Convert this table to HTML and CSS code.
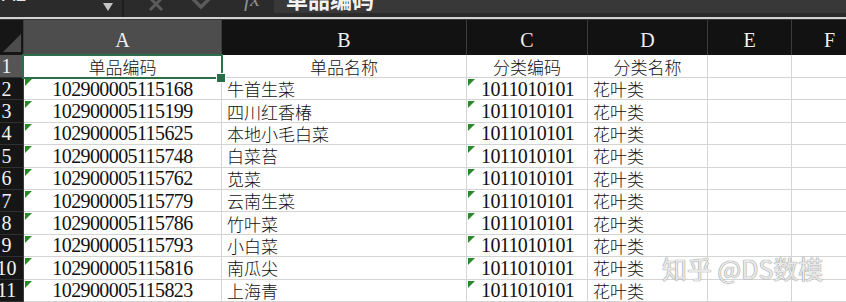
FILE: index.html
```html
<!DOCTYPE html>
<html lang="zh">
<head>
<meta charset="utf-8">
<title>Sheet</title>
<link rel="stylesheet" href="styles.css">
</head>
<body>
<div class="page">
  <div class="topbar">
    <div class="namebox"><span class="nb-text">A1</span><span class="nb-arrow"></span></div>
    <div class="tools">
      <svg class="ic ic-x" width="16" height="12" viewBox="0 0 16 12"><path d="M2 -2 L14 10 M14 -2 L2 10" stroke="#5a5a5a" stroke-width="3" fill="none"/></svg>
      <svg class="ic ic-check" width="20" height="12" viewBox="0 0 20 12"><path d="M1 -1 L9 7 L19 -3" stroke="#5a5a5a" stroke-width="3.5" fill="none"/></svg>
      <span class="fx">fx</span>
    </div>
    <div class="formula"><span class="f-text">单品编码</span></div>
  </div>
  <div class="divider"></div>
  <div class="grid">
    <div class="corner"><span class="corner-tri"></span></div>
    <div class="ch ch-sel">A</div>
    <div class="ch">B</div>
    <div class="ch">C</div>
    <div class="ch">D</div>
    <div class="ch">E</div>
    <div class="ch">F</div>

    <div class="rh rh-sel">1</div>
    <div class="c cjk center sel">单品编码<span class="handle"></span></div>
    <div class="c cjk center">单品名称</div>
    <div class="c cjk center">分类编码</div>
    <div class="c cjk center">分类名称</div>
    <div class="c"></div>
    <div class="c"></div>

    <div class="rh">2</div>
    <div class="c num center tri">102900005115168</div>
    <div class="c cjk">牛首生菜</div>
    <div class="c num code tri">1011010101</div>
    <div class="c cjk">花叶类</div>
    <div class="c"></div>
    <div class="c"></div>

    <div class="rh">3</div>
    <div class="c num center tri">102900005115199</div>
    <div class="c cjk">四川红香椿</div>
    <div class="c num code tri">1011010101</div>
    <div class="c cjk">花叶类</div>
    <div class="c"></div>
    <div class="c"></div>

    <div class="rh">4</div>
    <div class="c num center tri">102900005115625</div>
    <div class="c cjk">本地小毛白菜</div>
    <div class="c num code tri">1011010101</div>
    <div class="c cjk">花叶类</div>
    <div class="c"></div>
    <div class="c"></div>

    <div class="rh">5</div>
    <div class="c num center tri">102900005115748</div>
    <div class="c cjk">白菜苔</div>
    <div class="c num code tri">1011010101</div>
    <div class="c cjk">花叶类</div>
    <div class="c"></div>
    <div class="c"></div>

    <div class="rh">6</div>
    <div class="c num center tri">102900005115762</div>
    <div class="c cjk">苋菜</div>
    <div class="c num code tri">1011010101</div>
    <div class="c cjk">花叶类</div>
    <div class="c"></div>
    <div class="c"></div>

    <div class="rh">7</div>
    <div class="c num center tri">102900005115779</div>
    <div class="c cjk">云南生菜</div>
    <div class="c num code tri">1011010101</div>
    <div class="c cjk">花叶类</div>
    <div class="c"></div>
    <div class="c"></div>

    <div class="rh">8</div>
    <div class="c num center tri">102900005115786</div>
    <div class="c cjk">竹叶菜</div>
    <div class="c num code tri">1011010101</div>
    <div class="c cjk">花叶类</div>
    <div class="c"></div>
    <div class="c"></div>

    <div class="rh">9</div>
    <div class="c num center tri">102900005115793</div>
    <div class="c cjk">小白菜</div>
    <div class="c num code tri">1011010101</div>
    <div class="c cjk">花叶类</div>
    <div class="c"></div>
    <div class="c"></div>

    <div class="rh">10</div>
    <div class="c num center tri">102900005115816</div>
    <div class="c cjk">南瓜尖</div>
    <div class="c num code tri">1011010101</div>
    <div class="c cjk">花叶类</div>
    <div class="c"></div>
    <div class="c"></div>

    <div class="rh">11</div>
    <div class="c num center tri">102900005115823</div>
    <div class="c cjk">上海青</div>
    <div class="c num code tri">1011010101</div>
    <div class="c cjk">花叶类</div>
    <div class="c"></div>
    <div class="c"></div>
  </div>
  <div class="watermark">知乎 @DS数模</div>
</div>
</body>
</html>
```

FILE: styles.css
```css
html, body {
  margin: 0;
  padding: 0;
  background: #ffffff;
}
body {
  width: 846px;
  height: 302px;
  overflow: hidden;
}
.page {
  position: relative;
  width: 846px;
  height: 302px;
  overflow: hidden;
}

/* formula bar */
.topbar {
  display: flex;
  height: 17px;
  background: #2b2b2b;
  overflow: hidden;
}
.namebox {
  width: 124px;
  display: flex;
  justify-content: space-between;
  align-items: flex-start;
  border-right: 2px solid #1e1e1e;
  padding-left: 2px;
  box-sizing: border-box;
}
.nb-text {
  font-family: "Liberation Sans", Arial, sans-serif;
  font-size: 20px;
  line-height: 20px;
  color: #e6e6e6;
  margin-top: -16px;
}
.nb-arrow {
  width: 0;
  height: 0;
  border-left: 5px solid transparent;
  border-right: 5px solid transparent;
  border-top: 8px solid #c4c4c4;
  margin-top: 3px;
  margin-right: 9px;
}
.tools {
  width: 150px;
  display: flex;
  align-items: flex-start;
  padding-left: 24px;
  gap: 22px;
  box-sizing: border-box;
}
.ic { display: block; }
.ic-check { margin-left: 6px; }
.fx {
  font-family: "Liberation Serif", "Times New Roman", serif;
  font-style: italic;
  font-size: 22px;
  line-height: 20px;
  color: #8e8e8e;
  margin-top: -11px;
  margin-left: 10px;
}
.formula {
  flex: 1;
  height: 13px;
  background: #383838;
  overflow: hidden;
  padding-left: 12px;
}
.f-text {
  display: block;
  font-family: "Noto Sans CJK SC", sans-serif;
  font-weight: 700;
  font-size: 22px;
  line-height: 22px;
  color: #f2f2f2;
  margin-top: -13px;
}
.divider {
  height: 2px;
  background: #d2d2d2;
  border-bottom: 1px solid #3a3a3a;
}

/* grid */
.grid {
  display: grid;
  grid-template-columns: 24px 198px 245px 121px 120px 84px 76px;
  grid-template-rows: 35px 23px repeat(10, 22.4px);
}
.corner {
  background: #161616;
  border-right: 1px solid #3c3c3c;
  position: relative;
  overflow: hidden;
}
.corner-tri {
  position: absolute;
  right: 2px;
  bottom: 3px;
  width: 0;
  height: 0;
  border-left: 18px solid transparent;
  border-bottom: 18px solid #4c4c4c;
}
.ch {
  background: #121212;
  border-right: 1px solid #3c3c3c;
  color: #f0f0f0;
  font-family: "Liberation Serif", "Times New Roman", serif;
  font-size: 20px;
  line-height: 1;
  display: flex;
  align-items: center;
  justify-content: center;
  padding-top: 5px;
  box-sizing: border-box;
}
.ch-sel { background: #4d4d4d; }
.rh {
  background: #161616;
  border-bottom: 1px solid #303030;
  border-right: 1px solid #3c3c3c;
  color: #f2f2f2;
  font-family: "Liberation Serif", "Times New Roman", serif;
  font-size: 20px;
  line-height: 1;
  display: flex;
  align-items: center;
  justify-content: center;
  padding-right: 10px;
  box-sizing: border-box;
  white-space: nowrap;
}
.rh-sel { background: #555555; }
.c {
  border-right: 1px solid #d4d4d4;
  border-bottom: 1px solid #d4d4d4;
  box-sizing: border-box;
  display: flex;
  align-items: center;
  white-space: nowrap;
  position: relative;
  color: #111111;
  padding-left: 5px;
  line-height: 1;
}
.cjk {
  font-family: "Noto Sans CJK SC", sans-serif;
  font-weight: 300;
  font-size: 17px;
}
.num {
  font-family: "Liberation Serif", "Times New Roman", serif;
  font-size: 20px;
  letter-spacing: -0.6px;
}
.center {
  justify-content: center;
  padding-left: 0;
}
.code { padding-left: 14px; }
.tri::before {
  content: "";
  position: absolute;
  left: 1px;
  top: 1px;
  width: 0;
  height: 0;
  border-top: 7px solid #2a8a2a;
  border-right: 7px solid transparent;
}
.sel::after {
  content: "";
  position: absolute;
  left: -2px;
  top: -1px;
  right: -2px;
  bottom: -2px;
  border: 2.5px solid #2b6e4a;
  pointer-events: none;
}
.handle {
  position: absolute;
  right: -5px;
  bottom: -6px;
  width: 8px;
  height: 8px;
  background: #2b6e4a;
  border: 1px solid #ffffff;
  z-index: 2;
}

/* watermark overlay */
.watermark {
  position: absolute;
  left: 662px;
  top: 252px;
  font-family: "Noto Sans CJK SC", sans-serif;
  font-size: 25px;
  line-height: 32px;
  color: rgba(250, 250, 250, 0.85);
  text-shadow: 0 0 1px #8a8a8a, 0 0 1px #8a8a8a;
  white-space: nowrap;
}
```
